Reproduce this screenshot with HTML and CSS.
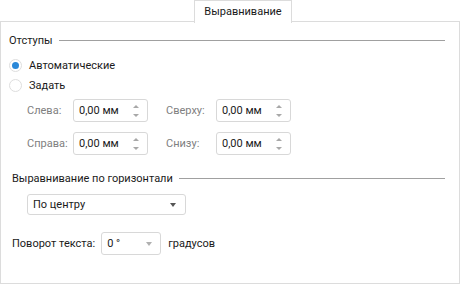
FILE: index.html
```html
<!DOCTYPE html>
<html lang="ru">
<head>
  <meta charset="UTF-8">
  <title>Выравнивание</title>
  <link rel="stylesheet" href="styles.css">
</head>
<body>

  <div class="tabbar">
    <div class="tab">Выравнивание</div>
  </div>

  <div class="panel">
    <div class="group-head">
      <span>Отступы</span>
      <div class="rule"></div>
    </div>

    <label class="radio-row">
      <span class="radio checked"></span>
      <span>Автоматические</span>
    </label>
    <label class="radio-row">
      <span class="radio"></span>
      <span>Задать</span>
    </label>

    <div class="margins">
      <span class="field-label">Слева:</span>
      <div class="spin"><span>0,00 мм</span><span class="spin-arrows"><i class="up"></i><i class="down"></i></span></div>
      <span></span>
      <span class="field-label">Сверху:</span>
      <div class="spin"><span>0,00 мм</span><span class="spin-arrows"><i class="up"></i><i class="down"></i></span></div>

      <span class="field-label">Справа:</span>
      <div class="spin"><span>0,00 мм</span><span class="spin-arrows"><i class="up"></i><i class="down"></i></span></div>
      <span></span>
      <span class="field-label">Снизу:</span>
      <div class="spin"><span>0,00 мм</span><span class="spin-arrows"><i class="up"></i><i class="down"></i></span></div>
    </div>

    <div class="group-head second">
      <span>Выравнивание по горизонтали</span>
      <div class="rule"></div>
    </div>

    <div class="select wide">
      <span>По центру</span>
      <i class="caret"></i>
    </div>

    <div class="rotate-row">
      <span>Поворот текста:</span>
      <div class="select small">
        <span>0 °</span>
        <i class="caret light"></i>
      </div>
      <span>градусов</span>
    </div>
  </div>

</body>
</html>
```

FILE: styles.css
```css
body {
  margin: 0;
  background-color: #fff;
  font-family: Roboto, "Noto Sans", sans-serif;
  font-size: 11px;
  color: #1a1a1a;
}
.tabbar {
  height: 22px;
  padding-left: 194px;
}
.tab {
  position: relative;
  z-index: 1;
  box-sizing: border-box;
  width: 98px;
  height: 23px;
  border: 1px solid #dcdcdc;
  border-bottom: none;
  background-color: #fff;
  text-align: center;
  line-height: 22px;
}
.panel {
  box-sizing: border-box;
  height: 263px;
  border: 1px solid #dcdcdc;
  margin-top: -1px;
}
.group-head {
  display: flex;
  align-items: center;
  height: 18px;
  margin-top: 9px;
  padding-left: 8px;
}
.group-head .rule {
  flex: 1;
  height: 1px;
  margin: 0 14px 0 6px;
  background-color: #a0a0a0;
}
.group-head.second {
  margin-top: 14px;
  padding-left: 11px;
}
.radio-row {
  display: flex;
  align-items: center;
  gap: 7px;
  height: 20px;
  padding-left: 8px;
}
.radio-row:first-of-type {
  margin-top: 6px;
}
.radio {
  box-sizing: border-box;
  width: 13px;
  height: 13px;
  border: 1px solid #dedede;
  border-radius: 50%;
  display: flex;
  align-items: center;
  justify-content: center;
}
.radio.checked::after {
  content: "";
  width: 7px;
  height: 7px;
  border-radius: 50%;
  background-color: #2a88d8;
}
.margins {
  display: grid;
  grid-template-columns: 46px 75px 18px 50px 75px;
  grid-auto-rows: 23px;
  row-gap: 10px;
  align-items: center;
  margin-top: 4px;
  padding-left: 26px;
}
.field-label {
  color: #808080;
}
.spin {
  box-sizing: border-box;
  height: 23px;
  display: flex;
  align-items: center;
  justify-content: space-between;
  padding: 0 8px 0 5px;
  border: 1px solid #d8d8d8;
  border-radius: 3px;
}
.spin-arrows {
  display: flex;
  flex-direction: column;
  gap: 6px;
}
.spin-arrows i,
.caret {
  display: block;
  width: 0;
  height: 0;
  border-left: 3px solid transparent;
  border-right: 3px solid transparent;
}
.spin-arrows .up {
  border-bottom: 3px solid #a8a8a8;
}
.spin-arrows .down {
  border-top: 3px solid #a8a8a8;
}
.select {
  box-sizing: border-box;
  height: 21px;
  display: flex;
  align-items: center;
  justify-content: space-between;
  border: 1px solid #d8d8d8;
  border-radius: 3px;
}
.select.wide {
  width: 159px;
  margin: 7px 0 0 26px;
  padding: 0 9px 0 5px;
}
.caret {
  border-top: 4px solid #555;
}
.caret.light {
  border-top-color: #b0b0b0;
}
.rotate-row {
  display: flex;
  align-items: center;
  margin-top: 17px;
  padding-left: 11px;
}
.select.small {
  width: 60px;
  height: 23px;
  margin: 0 7px 0 6px;
  padding: 0 8px 0 5px;
}
```
